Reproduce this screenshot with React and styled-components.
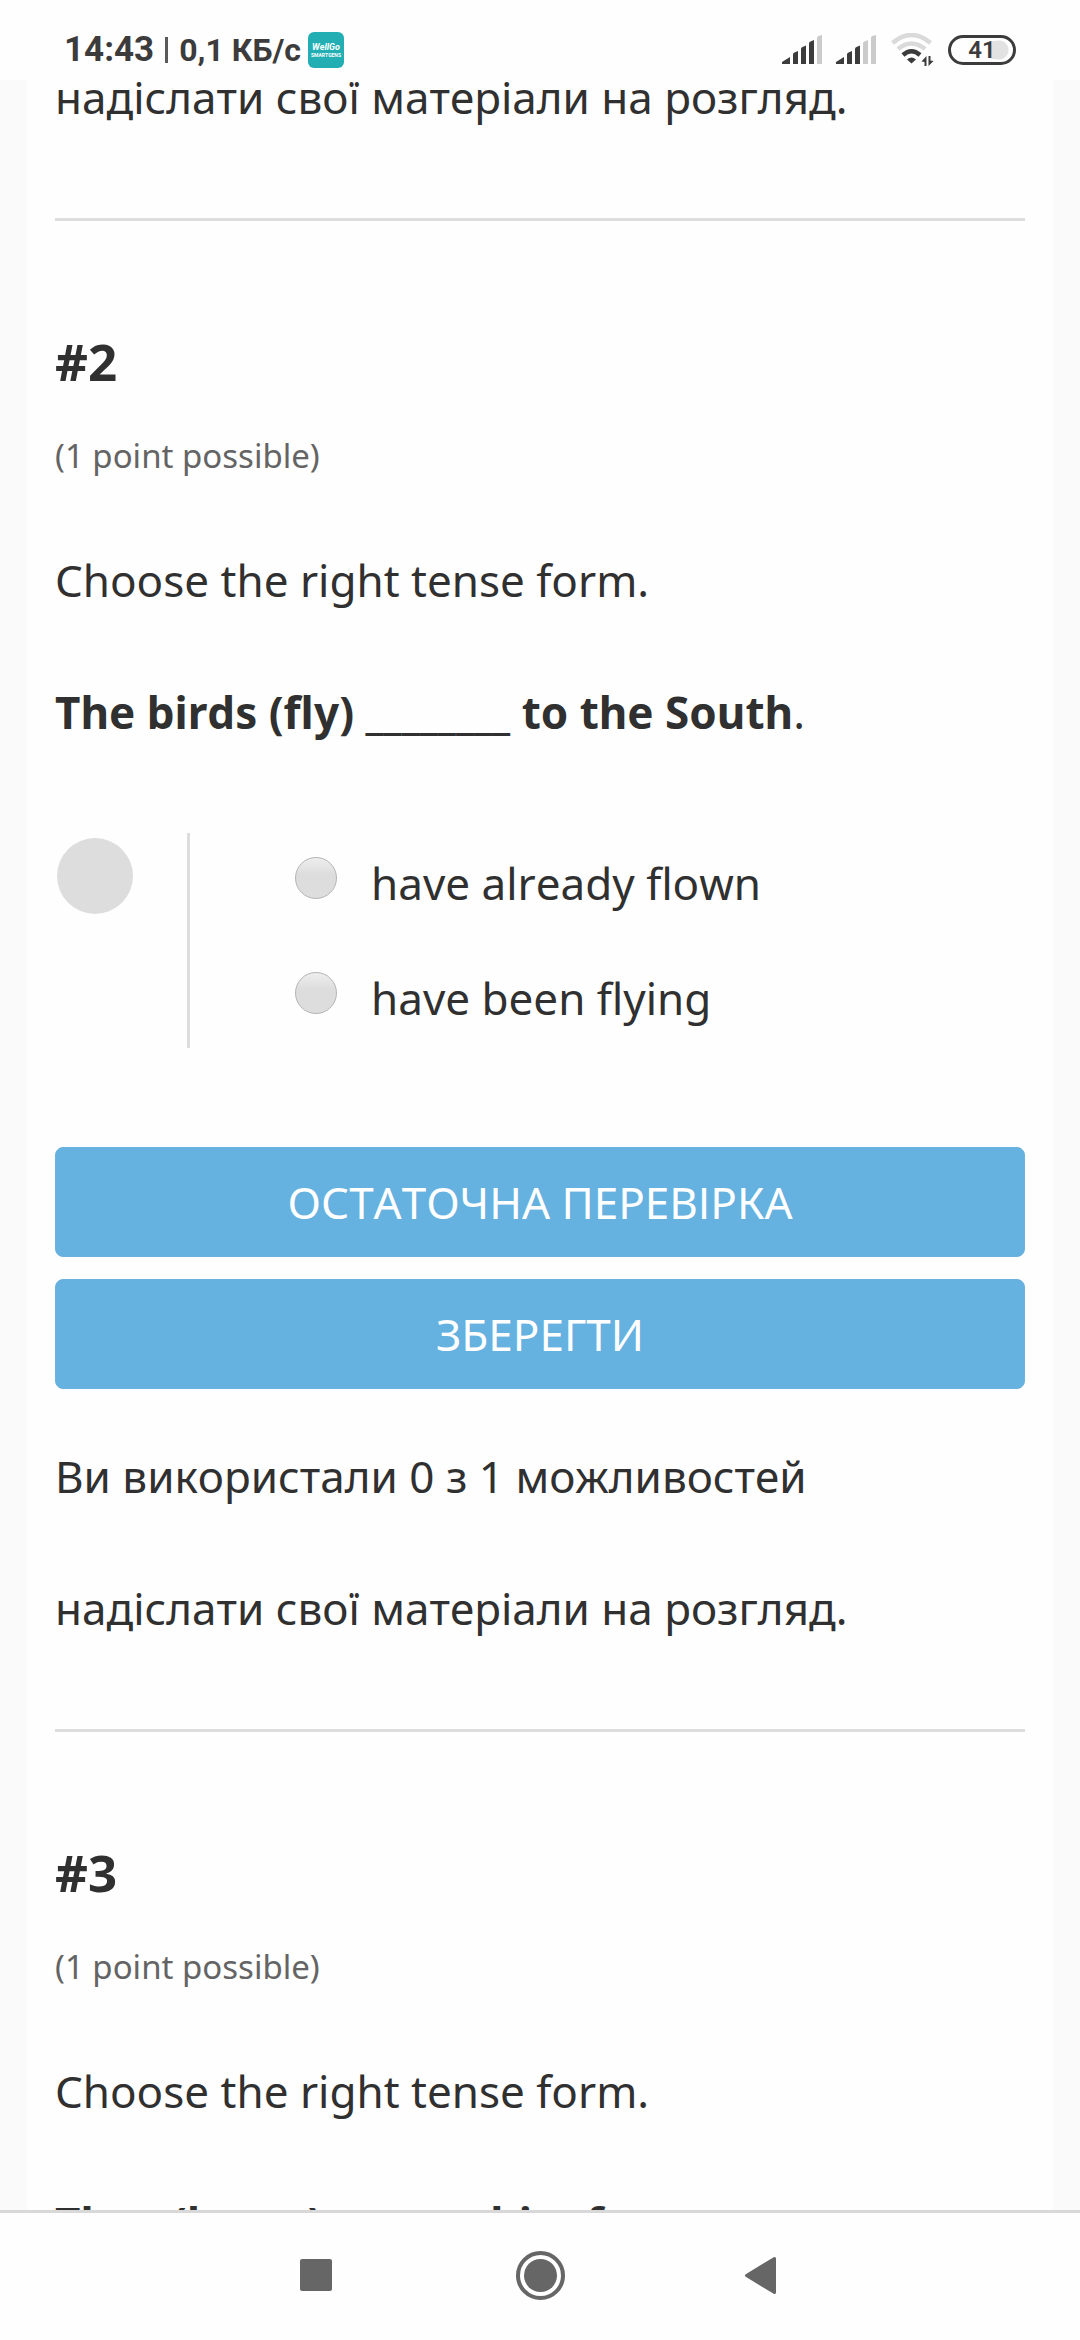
import React from 'react'
import styled, { createGlobalStyle } from 'styled-components';

const problems = [
  {
    id: 2,
    before: 'The birds (fly)',
    after: 'to the South',
    end: '.',
    options: ['have already flown', 'have been flying'],
  },
  {
    id: 3,
    before: 'They (know)',
    after: 'him for ages',
    end: '.',
  },
];

const Signal = ({ level }) => (
  <svg width="40" height="30" viewBox="0 0 40 30" aria-hidden="true">
    {[
      'M0 29V27L8 22V29Z',
      'M11 29V19.5Q11 18 12.500 17.500L16 16V29Z',
      'M19 29V14Q19 12.500 20.500 12L24 10.500V29Z',
      'M27 29V8.500Q27 7 28.500 6.500L32 5V29Z',
      'M35 29V3Q35 1.500 36.500 1L40 0V29Z',
    ].map((d, i) => (
      <path key={d} d={d} fill={i < level ? '#3c3c3c' : '#cbcbcb'} />
    ))}
  </svg>
);

const Wifi = () => (
  <svg width="44" height="34" viewBox="0 0 44 34" fill="none" aria-hidden="true">
    <path d="M2.500 10Q21.500 -6 40.500 10" stroke="#dadada" strokeWidth="4.500" />
    <path d="M8 16Q21.500 5 35 16" stroke="#dadada" strokeWidth="4.500" />
    <path d="M13 22Q21.500 14.500 30 22" stroke="#3c3c3c" strokeWidth="4.500" />
    <path d="M17 26.500Q21.500 22.500 26 26.500L21.500 30.500Z" fill="#3c3c3c" />
    <path d="M36.500 23V33H34.500V29L31.500 28.500ZM38.500 33V23H40.500V27.500L43.500 28Z" fill="#3c3c3c" />
  </svg>
);

const Problem = ({ problem }) => {
  const { id, before, after, end, options } = problem;
  return (
    <section>
      <Title>#{id}</Title>
      <Points>(1 point possible)</Points>
      <Task>Choose the right tense form.</Task>
      <Task>
        <b>{before} ________ {after}</b>{end}
      </Task>
      {options && (
        <form>
          <Answer>
            <Status />
            <Options role="radiogroup" aria-label={before}>
              {options.map((option, i) => (
                <Option key={option} htmlFor={`choice-${id}-${i}`}>
                  <Radio id={`choice-${id}-${i}`} type="radio" name={`problem-${id}`} />
                  {option}
                </Option>
              ))}
            </Options>
          </Answer>
          <Actions>
            <Button type="button">ОСТАТОЧНА ПЕРЕВІРКА</Button>
            <Button type="button">ЗБЕРЕГТИ</Button>
          </Actions>
          <Attempts>
            Ви використали 0 з 1 можливостей
            <br />
            надіслати свої матеріали на розгляд.
          </Attempts>
          <Divider />
        </form>
      )}
    </section>
  );
};

const App = () => {
  return (
    <Screen>
      <GlobalStyle />
      <StatusBar>
        <Clock>14:43</Clock>
        <Separator />
        <Speed>0,1 КБ/с</Speed>
        <Badge>
          <Brand>WellGo</Brand>
          <Tagline>SMARTGENS</Tagline>
        </Badge>
        <Indicators>
          <Signal level={4} />
          <Signal level={3} />
          <Wifi />
          <Battery>41</Battery>
        </Indicators>
      </StatusBar>
      <Viewport>
        <Card>
          <Attempts>надіслати свої матеріали на розгляд.</Attempts>
          <Divider />
          {problems.map((problem) => (
            <Problem key={problem.id} problem={problem} />
          ))}
        </Card>
      </Viewport>
      <NavBar>
        <NavButton aria-label="Recent apps">
          <svg width="56" height="56" viewBox="0 0 56 56" fill="#666">
            <rect x="10" y="10" width="32" height="32" rx="2" />
          </svg>
        </NavButton>
        <NavButton aria-label="Home">
          <svg width="56" height="56" viewBox="0 0 56 56">
            <circle cx="28.500" cy="26.500" r="22.500" fill="none" stroke="#666" strokeWidth="4" />
            <circle cx="28.500" cy="26.500" r="16.500" fill="#666" />
          </svg>
        </NavButton>
        <NavButton aria-label="Back">
          <svg width="56" height="56" viewBox="0 0 56 56" fill="#666" stroke="#666" strokeWidth="3" strokeLinejoin="round">
            <path d="M12.500 26.500L40.500 9.500V43.500Z" />
          </svg>
        </NavButton>
      </NavBar>
    </Screen>
  );
};

export default App;

const GlobalStyle = createGlobalStyle`
  * {
    box-sizing: border-box;
  }

  body {
    margin: 0;
    background: #fafafa;
    color: #303030;
    font-family: "Noto Sans", sans-serif;
    font-size: 44px;
    font-kerning: none;
    line-height: 66px;
  }
`;

const Screen = styled.div`
  display: flex;
  flex-direction: column;
  height: 100vh;
`;

const StatusBar = styled.header`
  display: flex;
  flex-shrink: 0;
  align-items: center;
  height: 80px;
  padding: 20px 64px 0;
  background: #fefefe;
  color: #3c3c3c;
  font-family: Roboto, sans-serif;
  line-height: 40px;
`;

const Clock = styled.span`
  font-size: 35px;
  font-weight: 700;
`;

const Separator = styled.span`
  width: 3px;
  height: 26px;
  margin: 0 11px;
  background: #5a5a5a;
`;

const Speed = styled.span`
  font-size: 32px;
  font-weight: 700;
`;

const Badge = styled.span`
  display: flex;
  flex-direction: column;
  align-items: center;
  justify-content: center;
  width: 36px;
  height: 36px;
  margin-left: 7px;
  border-radius: 6px;
  background: #22aeb3;
  color: #fff;
`;

const Brand = styled.span`
  font-size: 9px;
  font-style: italic;
  font-weight: 700;
  line-height: 10px;
`;

const Tagline = styled.span`
  font-size: 5px;
  font-weight: 700;
  line-height: 7px;
`;

const Indicators = styled.div`
  display: flex;
  align-items: center;
  gap: 14px;
  margin-left: auto;
`;

const Battery = styled.span`
  width: 68px;
  height: 30px;
  border: 3px solid #3c3c3c;
  border-radius: 15px;
  background: linear-gradient(#e2e2e2, #e2e2e2) 40px 3px / 8px 18px no-repeat,
    radial-gradient(circle at 48px 12px, #e2e2e2 9px, transparent 10px);
  font-size: 24px;
  font-weight: 600;
  line-height: 25px;
  text-align: center;
`;

const Viewport = styled.main`
  flex: 1;
  min-height: 0;
  padding: 0 27px;
  overflow: hidden;
`;

/* the list is scrolled part of the way down a line */
const Card = styled.div`
  min-height: 100%;
  margin-top: -49px;
  padding: 0 28px;
  background: #fefefe;
`;

const Title = styled.h3`
  margin: 106px 0 39px;
  font-size: 51px;
  line-height: 68px;
`;

const Points = styled.div`
  margin-bottom: 69px;
  color: #646464;
  font-size: 33px;
  line-height: 44px;
`;

const Task = styled.p`
  margin: 0 0 66px;
`;

const Answer = styled.div`
  display: flex;
  margin: 88px 0 99px;
`;

const Status = styled.span`
  width: 76px;
  height: 76px;
  margin: 5px 54px 0 2px;
  border-radius: 50%;
  background: #ddd;
`;

const Options = styled.div`
  display: flex;
  flex: 1;
  flex-direction: column;
  gap: 49px;
  padding: 17px 0 17px 105px;
  border-left: 3px solid #ddd;
`;

const Option = styled.label`
  display: flex;
  align-items: flex-start;
  gap: 34px;
`;

const Radio = styled.input`
  appearance: none;
  width: 42px;
  height: 42px;
  margin: 7px 0 0;
  border: 1px solid #b5b5b5;
  border-radius: 50%;
  background: linear-gradient(#eee, #ddd 40%);
`;

const Actions = styled.div`
  display: flex;
  flex-direction: column;
  gap: 22px;
  margin-bottom: 21px;
`;

const Button = styled.button`
  height: 110px;
  padding: 0;
  border: 1px solid #6db2dc;
  border-radius: 8px;
  background: #65b1df;
  color: #fff;
  font: inherit;
  font-kerning: none;
  cursor: pointer;
`;

const Attempts = styled.p`
  margin: 0;
  line-height: 132px;
`;

const Divider = styled.hr`
  height: 3px;
  margin: 55px 0 0;
  border: 0;
  background: #ddd;
`;

const NavBar = styled.nav`
  display: flex;
  flex-shrink: 0;
  justify-content: center;
  height: 130px;
  border-top: 3px solid #d8d8d8;
  background: #fefefe;
`;

const NavButton = styled.button`
  display: flex;
  align-items: center;
  justify-content: center;
  width: 222px;
  padding: 0;
  border: 0;
  background: none;
`;
